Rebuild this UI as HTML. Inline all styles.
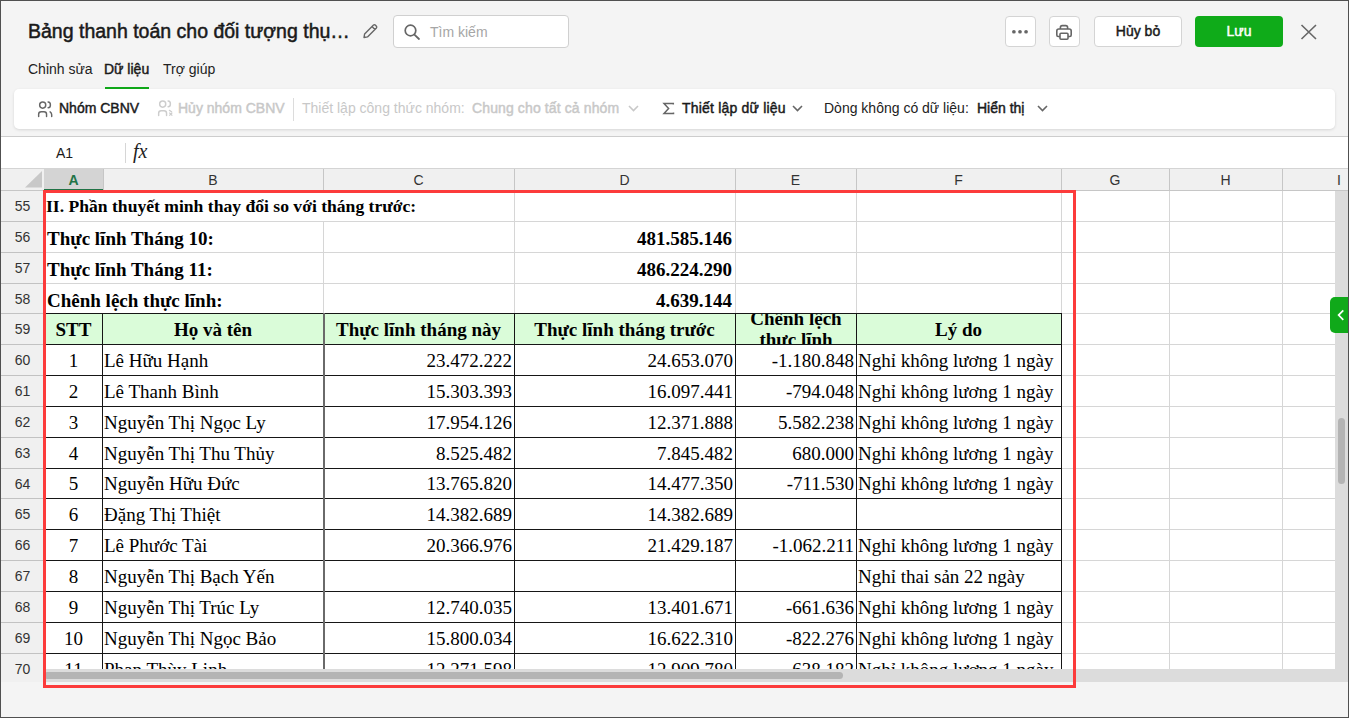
<!DOCTYPE html><html><head><meta charset="utf-8"><style>
*{margin:0;padding:0;box-sizing:border-box}
html,body{width:1349px;height:718px;overflow:hidden;background:#f4f4f4;font-family:"Liberation Sans", sans-serif;}
.a{position:absolute}
.t{position:absolute;white-space:nowrap;line-height:1}
.btn{position:absolute;background:#fff;border:1px solid #d4d4d4;border-radius:4px}
.gl{position:absolute;background:#d6d6d6}
.bl{position:absolute;background:#161616}
.rn{position:absolute;left:1px;width:43px;text-align:center;font-size:14px;color:#333;line-height:1}
.st{position:absolute;font-family:"Liberation Serif", serif;font-size:19px;color:#000;white-space:nowrap;line-height:1}
.b{font-weight:bold}
.m{-webkit-text-stroke:0.45px currentColor}
</style></head><body>
<div class="t" style="left:28px;top:22px;font-size:19.5px;color:#1a1a1a;-webkit-text-stroke:0.5px #1a1a1a">Bảng thanh toán cho đối tượng thụ…</div>
<svg class="a" style="left:361px;top:23px" width="18" height="17" viewBox="0 0 18 17"><path d="M3 14.5 L3.6 11 L12.5 2.1 Q13.4 1.3 14.3 2.1 L15.4 3.2 Q16.2 4.1 15.4 5 L6.5 13.9 Z M11 3.6 L13.9 6.5" fill="none" stroke="#666" stroke-width="1.4" stroke-linejoin="round"/></svg>
<div class="btn" style="left:393px;top:15px;width:176px;height:33px;border-color:#d0d0d0"></div>
<svg class="a" style="left:403px;top:24px" width="18" height="17" viewBox="0 0 18 17"><circle cx="7.5" cy="6.5" r="5.3" fill="none" stroke="#666" stroke-width="1.7"/><path d="M11.4 10.6 L16 15" stroke="#666" stroke-width="1.8" stroke-linecap="round"/></svg>
<div class="t" style="left:430px;top:25px;font-size:14px;color:#a6a6a6">Tìm kiếm</div>
<div class="btn" style="left:1005px;top:16px;width:31px;height:31px"></div>
<svg class="a" style="left:1005px;top:22px" width="30" height="20" viewBox="0 0 30 20"><circle cx="8.9" cy="9.75" r="1.85" fill="#666"/><circle cx="15" cy="9.75" r="1.85" fill="#666"/><circle cx="21.05" cy="9.75" r="1.85" fill="#666"/></svg>
<div class="btn" style="left:1049px;top:16px;width:31px;height:31px"></div>
<svg class="a" style="left:1055px;top:23px" width="18" height="18" viewBox="0 0 18 18"><path d="M5.4 6 V4.4 Q5.4 2.6 7.2 2.6 H10.8 Q12.6 2.6 12.6 4.4 V6" fill="none" stroke="#666" stroke-width="1.6"/><path d="M5 13.5 H3.2 Q1.8 13.5 1.8 12 V8 Q1.8 6 3.8 6 H14.2 Q16.2 6 16.2 8 V12 Q16.2 13.5 14.8 13.5 H13" fill="none" stroke="#666" stroke-width="1.6" stroke-linejoin="round"/><rect x="5" y="10.2" width="8" height="6" rx="1" fill="none" stroke="#666" stroke-width="1.6"/></svg>
<div class="btn" style="left:1094px;top:16px;width:88px;height:31px"></div>
<div class="t m" style="left:1094px;width:88px;text-align:center;top:24px;font-size:14px;color:#1a1a1a">Hủy bỏ</div>
<div class="a" style="left:1195px;top:16px;width:88px;height:31px;border-radius:4px;background:#0fab19"></div>
<div class="t m" style="left:1195px;width:88px;text-align:center;top:24px;font-size:14px;color:#fff">Lưu</div>
<svg class="a" style="left:1300px;top:24px" width="18" height="16" viewBox="0 0 18 16"><path d="M1.5 1 L16 15 M16 1 L1.5 15" stroke="#666" stroke-width="1.6"/></svg>
<div class="t" style="left:28px;top:62px;font-size:14px;color:#222">Chỉnh sửa</div>
<div class="t m" style="left:104px;top:62px;font-size:14px;color:#1a1a1a">Dữ liệu</div>
<div class="t" style="left:163px;top:62px;font-size:14px;color:#222">Trợ giúp</div>
<div class="a" style="left:105px;top:87px;width:44px;height:2px;background:#10a91a"></div>
<div class="a" style="left:14px;top:89px;width:1321px;height:40px;background:#fff;border-radius:5px;box-shadow:0 1px 3px rgba(0,0,0,0.12)"></div>
<svg class="a" style="left:37px;top:101px" width="17" height="17" viewBox="0 0 17 17"><circle cx="5.7" cy="4.1" r="3.05" fill="none" stroke="#666" stroke-width="1.45"/><path d="M1.65 15.4 V13.2 Q1.65 10.65 4.2 10.65 H7 Q9.55 10.65 9.55 13.2 V15.4" fill="none" stroke="#666" stroke-width="1.45" stroke-linecap="round"/><path d="M11.1 1.05 A2.3 2.85 0 0 1 11.1 6.75" fill="none" stroke="#666" stroke-width="1.45" stroke-linecap="round"/><path d="M13.1 10.85 Q14.7 11.8 14.7 13.8 V15.4" fill="none" stroke="#666" stroke-width="1.45" stroke-linecap="round"/></svg>
<div class="t m" style="left:59px;top:101px;font-size:14px;color:#1a1a1a">Nhóm CBNV</div>
<svg class="a" style="left:157px;top:100px" width="17" height="17" viewBox="0 0 17 17"><circle cx="5.7" cy="4.1" r="3.05" fill="none" stroke="#cdcdcd" stroke-width="1.45"/><path d="M1.65 15.4 V13.2 Q1.65 10.65 4.2 10.65 H7 Q9.55 10.65 9.55 13.2 V15.4" fill="none" stroke="#cdcdcd" stroke-width="1.45" stroke-linecap="round"/><path d="M11.1 1.05 A2.3 2.85 0 0 1 11.1 6.75" fill="none" stroke="#cdcdcd" stroke-width="1.45" stroke-linecap="round"/><path d="M12.4 10.4 L14.6 11.7" stroke="#cdcdcd" stroke-width="1.3" stroke-linecap="round"/><path d="M12.3 12.6 L15.3 15.6 M15.3 12.6 L12.3 15.6" stroke="#cdcdcd" stroke-width="1.3"/></svg>
<div class="t m" style="left:178px;top:101px;font-size:14px;color:#c8c8c8">Hủy nhóm CBNV</div>
<div class="a" style="left:293px;top:98px;width:1px;height:23px;background:#dcdcdc"></div>
<div class="t" style="left:302px;top:101px;font-size:14px;color:#c8c8c8">Thiết lập công thức nhóm:</div>
<div class="t m" style="left:472px;top:101px;font-size:14px;color:#c8c8c8;letter-spacing:0.12px">Chung cho tất cả nhóm</div>
<svg class="a" style="left:628px;top:105px" width="11" height="7" viewBox="0 0 11 7"><path d="M1 1 L5.5 5.5 L10 1" fill="none" stroke="#c8c8c8" stroke-width="1.6"/></svg>
<svg class="a" style="left:662px;top:102px" width="13" height="13" viewBox="0 0 13 13"><path d="M11.3 2.6 V1.4 H2 L6.6 6.5 L2 11.6 H11.5 V10.4" fill="none" stroke="#666" stroke-width="1.5" stroke-linejoin="miter"/></svg>
<div class="t m" style="left:682px;top:101px;font-size:14px;letter-spacing:0.2px;color:#1a1a1a">Thiết lập dữ liệu</div>
<svg class="a" style="left:792px;top:105px" width="11" height="7" viewBox="0 0 11 7"><path d="M1 1 L5.5 5.5 L10 1" fill="none" stroke="#666" stroke-width="1.6"/></svg>
<div class="t" style="left:824px;top:101px;font-size:14px;color:#222">Dòng không có dữ liệu:</div>
<div class="t m" style="left:977px;top:101px;font-size:14px;color:#1a1a1a">Hiển thị</div>
<svg class="a" style="left:1037px;top:105px" width="11" height="7" viewBox="0 0 11 7"><path d="M1 1 L5.5 5.5 L10 1" fill="none" stroke="#666" stroke-width="1.6"/></svg>
<div class="a" style="left:1px;top:136px;width:1347px;height:1px;background:#cdcdcd"></div>
<div class="a" style="left:1px;top:137px;width:1347px;height:31px;background:#fff"></div>
<div class="t" style="left:56px;top:146px;font-size:14px;color:#1a1a1a">A1</div>
<div class="a" style="left:125px;top:143px;width:1px;height:20px;background:#d6d6d6"></div>
<div class="t" style="left:133px;top:141px;font-family:'Liberation Serif',serif;font-style:italic;font-size:20px;color:#222">fx</div>
<div class="a" style="left:1px;top:168px;width:1347px;height:1px;background:#d4d4d4"></div>
<div class="a" style="left:1px;top:169px;width:1347px;height:21px;background:#f0f0f0"></div>
<div class="a" style="left:1px;top:190px;width:1347px;height:1px;background:#c6c6c6"></div>
<svg class="a" style="left:25px;top:171px" width="17" height="17" viewBox="0 0 17 17"><path d="M17 0 V16.5 H0 Z" fill="#c8c8c8"/></svg>
<div class="a" style="left:44px;top:169px;width:59px;height:20px;background:#d4d4d4"></div>
<div class="a" style="left:44px;top:189px;width:59px;height:2px;background:#217346"></div>
<div class="t b" style="left:44px;width:59px;text-align:center;top:173px;font-size:14px;color:#217346">A</div>
<div class="a" style="left:103px;top:169px;width:1px;height:21px;background:#c6c6c6"></div>
<div class="t" style="left:103px;width:220px;text-align:center;top:173px;font-size:14px;color:#333">B</div>
<div class="a" style="left:323px;top:169px;width:1px;height:21px;background:#c6c6c6"></div>
<div class="t" style="left:323px;width:191px;text-align:center;top:173px;font-size:14px;color:#333">C</div>
<div class="a" style="left:514px;top:169px;width:1px;height:21px;background:#c6c6c6"></div>
<div class="t" style="left:514px;width:221px;text-align:center;top:173px;font-size:14px;color:#333">D</div>
<div class="a" style="left:735px;top:169px;width:1px;height:21px;background:#c6c6c6"></div>
<div class="t" style="left:735px;width:121px;text-align:center;top:173px;font-size:14px;color:#333">E</div>
<div class="a" style="left:856px;top:169px;width:1px;height:21px;background:#c6c6c6"></div>
<div class="t" style="left:856px;width:205px;text-align:center;top:173px;font-size:14px;color:#333">F</div>
<div class="a" style="left:1061px;top:169px;width:1px;height:21px;background:#c6c6c6"></div>
<div class="t" style="left:1061px;width:108px;text-align:center;top:173px;font-size:14px;color:#333">G</div>
<div class="a" style="left:1169px;top:169px;width:1px;height:21px;background:#c6c6c6"></div>
<div class="t" style="left:1169px;width:113px;text-align:center;top:173px;font-size:14px;color:#333">H</div>
<div class="a" style="left:1282px;top:169px;width:1px;height:21px;background:#c6c6c6"></div>
<div class="t" style="left:1337px;top:173px;font-size:14px;color:#333">I</div>
<div class="a" style="left:44px;top:191px;width:1291px;height:478px;background:#fff;overflow:hidden" id="grid">
<div class="a" style="left:0px;top:123px;width:1017px;height:30px;background:#dafcd9"></div>
<div class="gl" style="left:0px;top:30px;width:1291px;height:1px"></div>
<div class="gl" style="left:0px;top:61px;width:1291px;height:1px"></div>
<div class="gl" style="left:0px;top:92px;width:1291px;height:1px"></div>
<div class="gl" style="left:1017px;top:122px;width:1291px;height:1px"></div>
<div class="gl" style="left:1017px;top:153px;width:1291px;height:1px"></div>
<div class="gl" style="left:1017px;top:184px;width:1291px;height:1px"></div>
<div class="gl" style="left:1017px;top:215px;width:1291px;height:1px"></div>
<div class="gl" style="left:1017px;top:246px;width:1291px;height:1px"></div>
<div class="gl" style="left:1017px;top:277px;width:1291px;height:1px"></div>
<div class="gl" style="left:1017px;top:307px;width:1291px;height:1px"></div>
<div class="gl" style="left:1017px;top:338px;width:1291px;height:1px"></div>
<div class="gl" style="left:1017px;top:369px;width:1291px;height:1px"></div>
<div class="gl" style="left:1017px;top:400px;width:1291px;height:1px"></div>
<div class="gl" style="left:1017px;top:431px;width:1291px;height:1px"></div>
<div class="gl" style="left:1017px;top:462px;width:1291px;height:1px"></div>
<div class="gl" style="left:1017px;top:493px;width:1291px;height:1px"></div>
<div class="gl" style="left:1017px;top:0px;width:1px;height:478px"></div>
<div class="gl" style="left:1125px;top:0px;width:1px;height:478px"></div>
<div class="gl" style="left:1238px;top:0px;width:1px;height:478px"></div>
<div class="gl" style="left:470px;top:0px;width:1px;height:122px"></div>
<div class="gl" style="left:691px;top:0px;width:1px;height:122px"></div>
<div class="gl" style="left:812px;top:0px;width:1px;height:122px"></div>
<div class="gl" style="left:279px;top:30px;width:1px;height:92px"></div>
<div class="bl" style="left:0px;top:122px;width:1017px;height:1px"></div>
<div class="bl" style="left:0px;top:153px;width:1017px;height:1px"></div>
<div class="bl" style="left:0px;top:184px;width:1017px;height:1px"></div>
<div class="bl" style="left:0px;top:215px;width:1017px;height:1px"></div>
<div class="bl" style="left:0px;top:246px;width:1017px;height:1px"></div>
<div class="bl" style="left:0px;top:277px;width:1017px;height:1px"></div>
<div class="bl" style="left:0px;top:307px;width:1017px;height:1px"></div>
<div class="bl" style="left:0px;top:338px;width:1017px;height:1px"></div>
<div class="bl" style="left:0px;top:369px;width:1017px;height:1px"></div>
<div class="bl" style="left:0px;top:400px;width:1017px;height:1px"></div>
<div class="bl" style="left:0px;top:431px;width:1017px;height:1px"></div>
<div class="bl" style="left:0px;top:462px;width:1017px;height:1px"></div>
<div class="bl" style="left:58px;top:122px;width:1px;height:478px"></div>
<div class="bl" style="left:470px;top:122px;width:1px;height:478px"></div>
<div class="bl" style="left:691px;top:122px;width:1px;height:478px"></div>
<div class="bl" style="left:812px;top:122px;width:1px;height:478px"></div>
<div class="bl" style="left:1017px;top:122px;width:1px;height:478px"></div>
<div class="a" style="left:279px;top:122px;width:2px;height:478px;background:#6a6a6a"></div>
<div class="st b" style="left:2px;top:7px;font-size:17.6px;">II. Phần thuyết minh thay đổi so với tháng trước:</div>
<div class="st b" style="left:3px;top:38px;font-size:19px;">Thực lĩnh Tháng 10:</div>
<div class="st b" style="left:470px;top:38px;font-size:19px;width:218px;text-align:right;">481.585.146</div>
<div class="st b" style="left:3px;top:69px;font-size:19px;">Thực lĩnh Tháng 11:</div>
<div class="st b" style="left:470px;top:69px;font-size:19px;width:218px;text-align:right;">486.224.290</div>
<div class="st b" style="left:3px;top:100px;font-size:19px;">Chênh lệch thực lĩnh:</div>
<div class="st b" style="left:470px;top:100px;font-size:19px;width:218px;text-align:right;">4.639.144</div>
<div class="st b" style="left:0px;top:129px;font-size:19px;width:59px;text-align:center;">STT</div>
<div class="st b" style="left:59px;top:129px;font-size:19px;width:220px;text-align:center;">Họ và tên</div>
<div class="st b" style="left:279px;top:129px;font-size:19px;width:191px;text-align:center;">Thực lĩnh tháng này</div>
<div class="st b" style="left:470px;top:129px;font-size:19px;width:221px;text-align:center;">Thực lĩnh tháng trước</div>
<div class="st b" style="left:812px;top:129px;font-size:19px;width:205px;text-align:center;">Lý do</div>
<div class="a" style="left:691px;top:123px;width:120px;height:30px;overflow:hidden"><div class="st b" style="left:1px;top:-6px;width:120px;text-align:center;line-height:21px">Chênh lệch<br>thực lĩnh</div></div>
<div class="st" style="left:0px;top:160px;font-size:19px;width:59px;text-align:center;">1</div>
<div class="st" style="left:60px;top:160px;font-size:19px;">Lê Hữu Hạnh</div>
<div class="st" style="left:279px;top:160px;font-size:19px;width:189px;text-align:right;">23.472.222</div>
<div class="st" style="left:470px;top:160px;font-size:19px;width:219px;text-align:right;">24.653.070</div>
<div class="st" style="left:691px;top:160px;font-size:19px;width:119px;text-align:right;">-1.180.848</div>
<div class="st" style="left:814px;top:160px;font-size:19px;">Nghỉ không lương 1 ngày</div>
<div class="st" style="left:0px;top:191px;font-size:19px;width:59px;text-align:center;">2</div>
<div class="st" style="left:60px;top:191px;font-size:19px;">Lê Thanh Bình</div>
<div class="st" style="left:279px;top:191px;font-size:19px;width:189px;text-align:right;">15.303.393</div>
<div class="st" style="left:470px;top:191px;font-size:19px;width:219px;text-align:right;">16.097.441</div>
<div class="st" style="left:691px;top:191px;font-size:19px;width:119px;text-align:right;">-794.048</div>
<div class="st" style="left:814px;top:191px;font-size:19px;">Nghỉ không lương 1 ngày</div>
<div class="st" style="left:0px;top:222px;font-size:19px;width:59px;text-align:center;">3</div>
<div class="st" style="left:60px;top:222px;font-size:19px;">Nguyễn Thị Ngọc Ly</div>
<div class="st" style="left:279px;top:222px;font-size:19px;width:189px;text-align:right;">17.954.126</div>
<div class="st" style="left:470px;top:222px;font-size:19px;width:219px;text-align:right;">12.371.888</div>
<div class="st" style="left:691px;top:222px;font-size:19px;width:119px;text-align:right;">5.582.238</div>
<div class="st" style="left:814px;top:222px;font-size:19px;">Nghỉ không lương 1 ngày</div>
<div class="st" style="left:0px;top:253px;font-size:19px;width:59px;text-align:center;">4</div>
<div class="st" style="left:60px;top:253px;font-size:19px;">Nguyễn Thị Thu Thủy</div>
<div class="st" style="left:279px;top:253px;font-size:19px;width:189px;text-align:right;">8.525.482</div>
<div class="st" style="left:470px;top:253px;font-size:19px;width:219px;text-align:right;">7.845.482</div>
<div class="st" style="left:691px;top:253px;font-size:19px;width:119px;text-align:right;">680.000</div>
<div class="st" style="left:814px;top:253px;font-size:19px;">Nghỉ không lương 1 ngày</div>
<div class="st" style="left:0px;top:283px;font-size:19px;width:59px;text-align:center;">5</div>
<div class="st" style="left:60px;top:283px;font-size:19px;">Nguyễn Hữu Đức</div>
<div class="st" style="left:279px;top:283px;font-size:19px;width:189px;text-align:right;">13.765.820</div>
<div class="st" style="left:470px;top:283px;font-size:19px;width:219px;text-align:right;">14.477.350</div>
<div class="st" style="left:691px;top:283px;font-size:19px;width:119px;text-align:right;">-711.530</div>
<div class="st" style="left:814px;top:283px;font-size:19px;">Nghỉ không lương 1 ngày</div>
<div class="st" style="left:0px;top:314px;font-size:19px;width:59px;text-align:center;">6</div>
<div class="st" style="left:60px;top:314px;font-size:19px;">Đặng Thị Thiệt</div>
<div class="st" style="left:279px;top:314px;font-size:19px;width:189px;text-align:right;">14.382.689</div>
<div class="st" style="left:470px;top:314px;font-size:19px;width:219px;text-align:right;">14.382.689</div>
<div class="st" style="left:0px;top:345px;font-size:19px;width:59px;text-align:center;">7</div>
<div class="st" style="left:60px;top:345px;font-size:19px;">Lê Phước Tài</div>
<div class="st" style="left:279px;top:345px;font-size:19px;width:189px;text-align:right;">20.366.976</div>
<div class="st" style="left:470px;top:345px;font-size:19px;width:219px;text-align:right;">21.429.187</div>
<div class="st" style="left:691px;top:345px;font-size:19px;width:119px;text-align:right;">-1.062.211</div>
<div class="st" style="left:814px;top:345px;font-size:19px;">Nghỉ không lương 1 ngày</div>
<div class="st" style="left:0px;top:376px;font-size:19px;width:59px;text-align:center;">8</div>
<div class="st" style="left:60px;top:376px;font-size:19px;">Nguyễn Thị Bạch Yến</div>
<div class="st" style="left:814px;top:376px;font-size:19px;">Nghỉ thai sản 22 ngày</div>
<div class="st" style="left:0px;top:407px;font-size:19px;width:59px;text-align:center;">9</div>
<div class="st" style="left:60px;top:407px;font-size:19px;">Nguyễn Thị Trúc Ly</div>
<div class="st" style="left:279px;top:407px;font-size:19px;width:189px;text-align:right;">12.740.035</div>
<div class="st" style="left:470px;top:407px;font-size:19px;width:219px;text-align:right;">13.401.671</div>
<div class="st" style="left:691px;top:407px;font-size:19px;width:119px;text-align:right;">-661.636</div>
<div class="st" style="left:814px;top:407px;font-size:19px;">Nghỉ không lương 1 ngày</div>
<div class="st" style="left:0px;top:438px;font-size:19px;width:59px;text-align:center;">10</div>
<div class="st" style="left:60px;top:438px;font-size:19px;">Nguyễn Thị Ngọc Bảo</div>
<div class="st" style="left:279px;top:438px;font-size:19px;width:189px;text-align:right;">15.800.034</div>
<div class="st" style="left:470px;top:438px;font-size:19px;width:219px;text-align:right;">16.622.310</div>
<div class="st" style="left:691px;top:438px;font-size:19px;width:119px;text-align:right;">-822.276</div>
<div class="st" style="left:814px;top:438px;font-size:19px;">Nghỉ không lương 1 ngày</div>
<div class="st" style="left:0px;top:469px;font-size:19px;width:59px;text-align:center;">11</div>
<div class="st" style="left:60px;top:469px;font-size:19px;">Phan Thùy Linh</div>
<div class="st" style="left:279px;top:469px;font-size:19px;width:189px;text-align:right;">12.271.598</div>
<div class="st" style="left:470px;top:469px;font-size:19px;width:219px;text-align:right;">12.909.780</div>
<div class="st" style="left:691px;top:469px;font-size:19px;width:119px;text-align:right;">-638.182</div>
<div class="st" style="left:814px;top:469px;font-size:19px;">Nghỉ không lương 1 ngày</div>
</div>
<div class="a" style="left:1px;top:191px;width:42px;height:491px;background:#f0f0f0"></div>
<div class="rn" style="top:199px">55</div>
<div class="a" style="left:1px;top:221px;width:42px;height:1px;background:#c2c2c2"></div>
<div class="rn" style="top:230px">56</div>
<div class="a" style="left:1px;top:252px;width:42px;height:1px;background:#c2c2c2"></div>
<div class="rn" style="top:261px">57</div>
<div class="a" style="left:1px;top:283px;width:42px;height:1px;background:#c2c2c2"></div>
<div class="rn" style="top:292px">58</div>
<div class="a" style="left:1px;top:313px;width:42px;height:1px;background:#c2c2c2"></div>
<div class="rn" style="top:322px">59</div>
<div class="a" style="left:1px;top:344px;width:42px;height:1px;background:#c2c2c2"></div>
<div class="rn" style="top:353px">60</div>
<div class="a" style="left:1px;top:375px;width:42px;height:1px;background:#c2c2c2"></div>
<div class="rn" style="top:384px">61</div>
<div class="a" style="left:1px;top:406px;width:42px;height:1px;background:#c2c2c2"></div>
<div class="rn" style="top:415px">62</div>
<div class="a" style="left:1px;top:437px;width:42px;height:1px;background:#c2c2c2"></div>
<div class="rn" style="top:446px">63</div>
<div class="a" style="left:1px;top:468px;width:42px;height:1px;background:#c2c2c2"></div>
<div class="rn" style="top:477px">64</div>
<div class="a" style="left:1px;top:498px;width:42px;height:1px;background:#c2c2c2"></div>
<div class="rn" style="top:507px">65</div>
<div class="a" style="left:1px;top:529px;width:42px;height:1px;background:#c2c2c2"></div>
<div class="rn" style="top:538px">66</div>
<div class="a" style="left:1px;top:560px;width:42px;height:1px;background:#c2c2c2"></div>
<div class="rn" style="top:569px">67</div>
<div class="a" style="left:1px;top:591px;width:42px;height:1px;background:#c2c2c2"></div>
<div class="rn" style="top:600px">68</div>
<div class="a" style="left:1px;top:622px;width:42px;height:1px;background:#c2c2c2"></div>
<div class="rn" style="top:631px">69</div>
<div class="a" style="left:1px;top:653px;width:42px;height:1px;background:#c2c2c2"></div>
<div class="rn" style="top:662px">70</div>
<div class="a" style="left:43px;top:191px;width:1px;height:491px;background:#cdcdcd"></div>
<div class="a" style="left:1px;top:682px;width:1347px;height:35px;background:#f4f4f4"></div>
<div class="a" style="left:1335px;top:191px;width:13px;height:491px;background:#dcdcdc"></div>
<div class="a" style="left:1338px;top:418px;width:7px;height:66px;border-radius:4px;background:#b4b4b4"></div>
<div class="a" style="left:44px;top:669px;width:1304px;height:13px;background:#dcdcdc"></div>
<div class="a" style="left:44px;top:672px;width:799px;height:7px;border-radius:4px;background:#b4b4b4"></div>
<div class="a" style="left:1330px;top:297px;width:18px;height:36px;border-radius:5px 0 0 5px;background:#10a91a"></div>
<svg class="a" style="left:1337px;top:309px" width="8" height="12" viewBox="0 0 8 12"><path d="M6.3 1.3 L1.6 6.1 L6.3 10.9" fill="none" stroke="#fff" stroke-width="1.7"/></svg>
<div class="a" style="left:43px;top:190px;width:1033px;height:498px;border:3px solid #fc3b3b"></div>
<div class="a" style="left:0;top:0;width:1349px;height:718px;border:1px solid #505050"></div>
</body></html>
